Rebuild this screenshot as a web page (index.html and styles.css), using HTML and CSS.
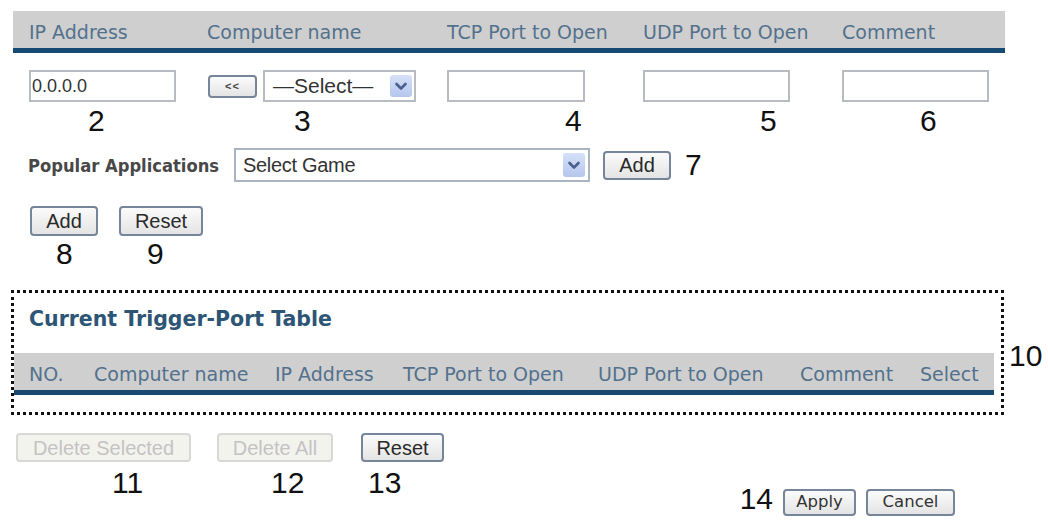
FILE: index.html
```html
<!DOCTYPE html>
<html>
<head>
<meta charset="utf-8">
<link rel="stylesheet" href="styles.css">
</head>
<body>
<div class="page">
  <div class="hdr cols">
    <span>IP Address</span>
    <span>Computer name</span>
    <span>TCP Port to Open</span>
    <span>UDP Port to Open</span>
    <span>Comment</span>
  </div>

  <div class="inrow cols">
    <div class="cell">
      <input class="txt w147" type="text" value="0.0.0.0">
      <div class="num n2">2</div>
    </div>
    <div class="cell">
      <div class="pick">
        <button class="btn tiny">&lt;&lt;</button>
        <div class="sel sel-s"><span>—Select—</span><span class="arrow"><svg viewBox="0 0 22 22" width="22" height="22"><path d="M6.5 9 L11 13.5 L15.5 9" fill="none" stroke="#4a5f8e" stroke-width="2.6" stroke-linecap="round" stroke-linejoin="round"/></svg></span></div>
      </div>
      <div class="num n3">3</div>
    </div>
    <div class="cell">
      <input class="txt w138" type="text" value="">
      <div class="num n4">4</div>
    </div>
    <div class="cell">
      <input class="txt w147" type="text" value="">
      <div class="num n5">5</div>
    </div>
    <div class="cell">
      <input class="txt w147" type="text" value="">
      <div class="num n6">6</div>
    </div>
  </div>

  <div class="poprow">
    <span class="poplabel">Popular Applications</span>
    <div class="sel sel-g"><span>Select Game</span><span class="arrow tall"><svg viewBox="0 0 22 24" width="22" height="24"><path d="M6.5 10 L11 14.5 L15.5 10" fill="none" stroke="#4a5f8e" stroke-width="2.6" stroke-linecap="round" stroke-linejoin="round"/></svg></span></div>
    <button class="btn b-add7">Add</button>
    <span class="num n7">7</span>
  </div>

  <div class="actrow">
    <div class="stack">
      <button class="btn b-add">Add</button>
      <div class="num n8">8</div>
    </div>
    <div class="stack">
      <button class="btn b-reset">Reset</button>
      <div class="num n9">9</div>
    </div>
  </div>

  <div class="tablerow">
    <div class="dotbox">
      <div class="ttitle">Current Trigger-Port Table</div>
      <div class="thead">
        <span>NO.</span>
        <span>Computer name</span>
        <span>IP Address</span>
        <span>TCP Port to Open</span>
        <span>UDP Port to Open</span>
        <span>Comment</span>
        <span>Select</span>
      </div>
    </div>
    <div class="num n10">10</div>
  </div>

  <div class="bottom">
    <div class="stack">
      <button class="btn dis b-dels">Delete Selected</button>
      <div class="num n11">11</div>
    </div>
    <div class="stack">
      <button class="btn dis b-dela">Delete All</button>
      <div class="num n12">12</div>
    </div>
    <div class="stack">
      <button class="btn b-reset2">Reset</button>
      <div class="num n13">13</div>
    </div>
    <div class="applygrp">
      <span class="num n14">14</span>
      <button class="btn small b-apply">Apply</button>
      <button class="btn small b-cancel">Cancel</button>
    </div>
  </div>
</div>
</body>
</html>
```

FILE: styles.css
```css
* { box-sizing: border-box; }
html, body { margin: 0; padding: 0; background: #ffffff; }
body { font-family: "Liberation Sans", Arial, sans-serif; color: #222; width: 1048px; height: 523px; overflow: hidden; }

.page { padding-top: 11px; }

.cols {
  display: grid;
  grid-template-columns: 178px 240px 196px 199px 1fr;
  padding-left: 16px;
}

.hdr {
  margin-left: 13px;
  width: 992px;
  height: 42px;
  background: #cfcfcf;
  border-bottom: 5px solid #174a72;
  padding-top: 5px;
  line-height: 32px;
  font-family: "DejaVu Sans", Verdana, sans-serif;
  font-size: 19px;
  color: #53718d;
  white-space: nowrap;
}

.inrow {
  margin-left: 13px;
  width: 992px;
  margin-top: 17px;
  align-items: start;
}

.cell { display: flex; flex-direction: column; align-items: flex-start; }

.txt {
  height: 32px;
  border: 2px solid #b8bcc1;
  background: #fff;
  padding: 0 1px;
  font-family: "Liberation Sans", Arial, sans-serif;
  font-size: 18px;
  color: #333;
  outline: none;
  margin: 0;
}
.w147 { width: 147px; }
.w138 { width: 138px; }

.num {
  font-family: "Liberation Sans", Arial, sans-serif;
  font-size: 30px;
  line-height: 30px;
  color: #111;
}
.inrow .num { margin-top: 4px; }
.n2 { margin-left: 59px; }
.n3 { margin-left: 87px; }
.n4 { margin-left: 118px; }
.n5 { margin-left: 117px; }
.n6 { margin-left: 78px; }

.pick { display: flex; align-items: center; height: 32px; margin-left: 1px; gap: 6px; }

.btn {
  font-family: "Liberation Sans", Arial, sans-serif;
  font-size: 20px;
  color: #2a2a2a;
  background: linear-gradient(#fbfbfb, #e4e4e4);
  border: 2px solid #76859a;
  border-radius: 4px;
  padding: 0;
  margin: 0;
  line-height: 1;
  cursor: default;
}
.tiny { width: 49px; height: 23px; font-size: 11px; font-weight: bold; color: #444; letter-spacing: 1px; }

.sel {
  display: flex;
  align-items: center;
  justify-content: space-between;
  border: 2px solid #b8bcc1;
  background: #fff;
  font-family: "Liberation Sans", Arial, sans-serif;
  font-size: 20px;
  color: #333;
}
.sel-s { width: 153px; height: 32px; padding: 0 2px 0 8px; font-size: 21px; }
.sel-g { width: 356px; height: 34px; padding: 0 3px 0 7px; border-color: #a9b5c3; letter-spacing: -0.3px; }

.arrow {
  width: 22px; height: 22px;
  border-radius: 3px;
  background: linear-gradient(#d6e1f8, #b5c6ee);
  display: block;
}
.arrow svg { display: block; }
.arrow.tall { height: 24px; }

.poprow {
  display: flex;
  align-items: center;
  margin-top: 12px;
  margin-left: 28px;
  height: 34px;
}
.poplabel {
  width: 206px;
  font-family: "DejaVu Sans Condensed", "DejaVu Sans", sans-serif;
  font-weight: bold;
  font-size: 18.2px;
  color: #484848;
  white-space: nowrap;
}
.b-add7 { width: 68px; height: 29px; margin-left: 13px; }
.n7 { margin-left: 14px; }

.actrow {
  display: flex;
  gap: 21px;
  margin-top: 24px;
  margin-left: 30px;
}
.stack { display: flex; flex-direction: column; align-items: flex-start; }
.stack .num { margin-top: 3px; }
.b-add { width: 68px; height: 30px; }
.b-reset { width: 84px; height: 30px; }
.n8 { margin-left: 26px; }
.n9 { margin-left: 28px; }

.tablerow {
  display: flex;
  align-items: center;
  margin-top: 21px;
  margin-left: 11px;
}
.dotbox {
  width: 993px;
  height: 125px;
  border: 3px dotted #111;
  padding: 15px 7px 0 0;
}
.ttitle {
  font-family: "DejaVu Sans", Verdana, sans-serif;
  font-weight: bold;
  font-size: 20.5px;
  line-height: 23px;
  color: #2c5576;
  padding-left: 15px;
  white-space: nowrap;
}
.thead {
  margin-top: 22px;
  height: 42px;
  background: #cfcfcf;
  border-bottom: 5px solid #174a72;
  padding-top: 5px;
  padding-left: 15px;
  line-height: 32px;
  font-family: "DejaVu Sans", Verdana, sans-serif;
  font-size: 19px;
  color: #53718d;
  white-space: nowrap;
  display: grid;
  grid-template-columns: 65px 181px 128px 195px 202px 120px 1fr;
}
.n10 { margin-left: 5px; margin-top: 7px; }

.bottom {
  display: flex;
  align-items: flex-start;
  margin-top: 18px;
  padding-left: 16px;
  padding-right: 93px;
}
.bottom .stack .num { margin-top: 6px; }
.b-dels { width: 175px; height: 29px; }
.b-dela { width: 116px; height: 29px; margin-left: 26px; }
.b-reset2 { width: 83px; height: 29px; margin-left: 28px; }
.bottom .stack:nth-child(2) .num { margin-left: 80px; }
.bottom .stack:nth-child(3) .num { margin-left: 35px; }
.n11 { margin-left: 96px; }

.btn.dis {
  background: #f3f3ee;
  border-color: #d7d9d4;
  color: #c3c3c3;
}

.applygrp {
  margin-left: auto;
  margin-top: 51px;
  display: flex;
  align-items: flex-start;
}
.n14 { margin-right: 10px; margin-top: 0; }
.small {
  font-family: "DejaVu Sans", Verdana, sans-serif;
  font-size: 16.5px;
  height: 27px;
  margin-top: 5px;
  color: #333;
}
.b-apply { width: 73px; }
.b-cancel { width: 89px; margin-left: 10px; }
```
